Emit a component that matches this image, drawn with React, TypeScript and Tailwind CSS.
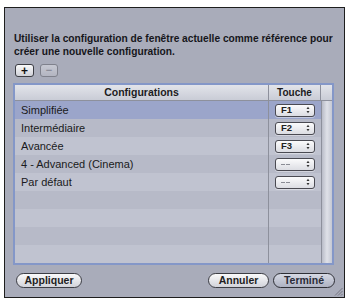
import React from "react";

const rows: { name: string; key: string | null; sel?: boolean }[] = [
  { name: "Simplifiée", key: "F1", sel: true },
  { name: "Intermédiaire", key: "F2" },
  { name: "Avancée", key: "F3" },
  { name: "4 - Advanced (Cinema)", key: "--" },
  { name: "Par défaut", key: "--" },
  { name: "", key: null },
  { name: "", key: null },
  { name: "", key: null },
  { name: "", key: null },
];

function Arrows() {
  return (
    <svg width="4" height="8" viewBox="0 0 4 8" className="block">
      <path d="M0.5 3 L2 0.8 L3.5 3 Z" fill="#333" />
      <path d="M0.5 5 L2 7.2 L3.5 5 Z" fill="#333" />
    </svg>
  );
}

function Popup({ label }: { label: string }) {
  const dash = label === "--";
  return (
    <div className="flex h-[13px] w-[40px] items-center justify-between rounded-[3px] border border-[#4a4a52] bg-gradient-to-b from-[#fbfbfc] to-[#dcdde3] pl-[5px] pr-[4px] shadow-[0_1px_0_rgba(255,255,255,0.4)]">
      {dash ? (
        <span className="flex gap-[1px]">
          <span className="block h-[1px] w-[4px] bg-[#8a8c95]" />
          <span className="block h-[1px] w-[4px] bg-[#8a8c95]" />
        </span>
      ) : (
        <span className="text-[9.5px] font-bold leading-none text-[#222]">{label}</span>
      )}
      <Arrows />
    </div>
  );
}

function PillButton({ label, w, dark }: { label: string; w: string; dark?: boolean }) {
  return (
    <div
      className={`flex h-[15px] ${w} items-center justify-center rounded-full border ${
        dark
          ? "border-[#2e2f36] bg-gradient-to-b from-[#d6d9e4] to-[#aeb2c2] text-[#2a2c38]"
          : "border-[#3d3e45] bg-gradient-to-b from-[#fafafb] to-[#d2d3da] text-[#1e1e22]"
      } text-[10.5px] font-bold leading-none`}
    >
      {label}
    </div>
  );
}

export default function App() {
  return (
    <div
      className="h-[301px] w-[348px] bg-white pl-[4px] pt-[7px]"
      style={{ fontFamily: "'Liberation Sans', Arial, sans-serif" }}
    >
      <div className="relative flex h-[291px] w-[341px] flex-col border border-[#1e1e1e] bg-[#a9acba]">
        <div className="whitespace-nowrap pl-[9px] pt-[25px] text-[10.2px] font-bold leading-[12.5px] text-[#16161a]">
          Utiliser la configuration de fenêtre actuelle comme référence pour
          <br />
          créer une nouvelle configuration.
        </div>
        <div className="mt-[6px] flex gap-[6px] pl-[10px]">
          <div className="flex h-[13px] w-[19px] items-center justify-center rounded-[3px] border border-[#3c3d44] bg-gradient-to-b from-[#fafafb] to-[#d0d1d8] text-[12px] font-bold leading-none text-[#111]">
            +
          </div>
          <div className="flex h-[13px] w-[18px] items-center justify-center rounded-[3px] border border-[#7f818c] bg-gradient-to-b from-[#c6c8d2] to-[#b3b5c1] text-[11px] font-bold leading-none text-[#8b8d99]">
            −
          </div>
        </div>
        <div className="ml-[8px] mt-[6px] w-[321px] border-2 border-[#8497c8]">
          <div className="flex h-[16px] border-b border-[#8d909c] bg-gradient-to-b from-[#e2e4ea] to-[#c9ccd6] text-[10px] font-bold leading-none text-[#1c1c22]">
            <div className="flex w-[254px] items-center justify-center border-r border-[#8d909c] text-[10.5px]">Configurations</div>
            <div className="flex w-[52px] items-center justify-center border-r border-[#8d909c]">Touche</div>
            <div className="flex-1" />
          </div>
          <div className="flex">
            <div className="flex w-[306px] flex-col">
              {rows.map((r, i) => (
                <div
                  key={i}
                  className={`flex h-[18px] ${
                    r.sel ? "bg-[#9ba5ca]" : i % 2 === 1 ? "bg-[#b7bac8]" : "bg-[#c0c3d0]"
                  }`}
                >
                  <div className="flex w-[254px] items-center border-r border-[#8d909c] pl-[6px] text-[11px] leading-none text-[#1a1a20]">
                    {r.name}
                  </div>
                  <div className="flex w-[52px] items-center pl-[6px]">{r.key && <Popup label={r.key} />}</div>
                </div>
              ))}
            </div>
            <div className="flex-1 border-l border-[#8d909c] bg-gradient-to-r from-[#b9bcc8] via-[#dfe1e8] to-[#c5c8d3]" />
          </div>
        </div>
        <div className="mt-[8px] flex items-center pl-[11px] pr-[9px]">
          <PillButton label="Appliquer" w="w-[66px]" />
          <div className="flex-1" />
          <PillButton label="Annuler" w="w-[61px]" />
          <div className="w-[4px]" />
          <PillButton label="Terminé" w="w-[62px]" dark />
        </div>
        <svg
          width="9"
          height="9"
          viewBox="0 0 9 9"
          className="absolute bottom-[1px] right-[1px]"
        >
          <path d="M8.5 1 L1 8.5 M8.5 4 L4 8.5 M8.5 7 L7 8.5" stroke="#6f717c" strokeWidth="0.9" />
        </svg>
      </div>
    </div>
  );
}
